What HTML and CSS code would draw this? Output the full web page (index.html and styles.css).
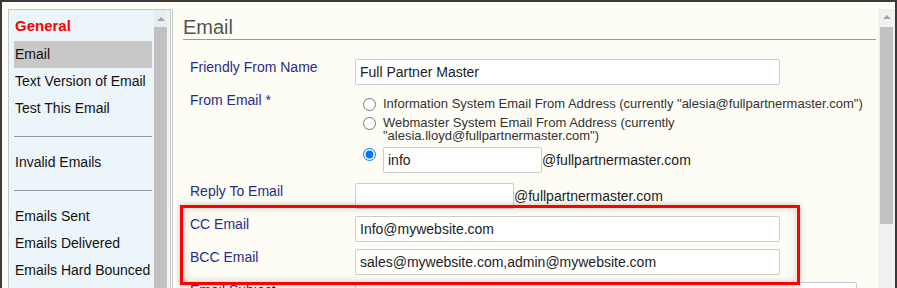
FILE: index.html
```html
<!DOCTYPE html>
<html lang="en">
<head>
    <meta charset="UTF-8">
    <meta name="viewport" content="width=device-width, initial-scale=1.0">
    <title>Email Settings</title>
    <link rel="stylesheet" href="styles.css">
</head>
<body>
    <div class="frame">
        <aside class="side">
            <ul class="menu">
                <li class="menu-head">General</li>
                <li class="active">Email</li>
                <li>Text Version of Email</li>
                <li>Test This Email</li>
                <li class="sep"></li>
                <li>Invalid Emails</li>
                <li class="sep"></li>
                <li>Emails Sent</li>
                <li>Emails Delivered</li>
                <li>Emails Hard Bounced</li>
            </ul>
            <div class="vscroll side-scroll">
                <span class="arrow"></span>
                <span class="thumb"></span>
            </div>
        </aside>

        <main class="content">
            <h2 class="title">Email</h2>
            <div class="form">
                <div class="row">
                    <label class="label">Friendly From Name</label>
                    <input class="field" type="text" value="Full Partner Master">
                </div>
                <div class="row">
                    <label class="label">From Email *</label>
                    <div class="options">
                        <div class="option">
                            <input type="radio" name="from">
                            <span class="opt-text">Information System Email From Address (currently "alesia@fullpartnermaster.com")</span>
                        </div>
                        <div class="option">
                            <input type="radio" name="from">
                            <span class="opt-text">Webmaster System Email From Address (currently<br>"alesia.lloyd@fullpartnermaster.com")</span>
                        </div>
                        <div class="option">
                            <input type="radio" name="from" checked>
                            <input class="field short" type="text" value="info">
                            <span class="domain">@fullpartnermaster.com</span>
                        </div>
                    </div>
                </div>
                <div class="row">
                    <label class="label">Reply To Email</label>
                    <input class="field short" type="text" value="">
                    <span class="domain">@fullpartnermaster.com</span>
                </div>
                <div class="row">
                    <label class="label">CC Email</label>
                    <input class="field" type="text" value="Info@mywebsite.com">
                </div>
                <div class="row">
                    <label class="label">BCC Email</label>
                    <input class="field" type="text" value="sales@mywebsite.com,admin@mywebsite.com">
                </div>
                <div class="row">
                    <label class="label">Email Subject</label>
                    <input class="field wide" type="text" value="">
                </div>
            </div>
            <!-- annotation box round the CC / BCC fields -->
            <div class="highlight"></div>
        </main>

        <div class="vscroll main-scroll">
            <span class="arrow"></span>
            <span class="thumb"></span>
        </div>
    </div>
</body>
</html>
```

FILE: styles.css
```css
body {
    margin: 0;
    font-family: "Liberation Sans", Arial, sans-serif;
    font-size: 14px;
    color: #111;
}
.frame {
    display: flex;
    align-items: flex-start;
    width: 897px;
    height: 288px;
    box-sizing: border-box;
    border-top: 2px solid #3a3a3a;
    border-left: 2px solid #3a3a3a;
    border-right: 2px solid #3a3a3a;
    background-color: #fdfdf5;
    overflow: hidden;
}

/* left menu */
.side {
    display: flex;
    width: 163px;
    height: 300px;
    box-sizing: border-box;
    margin: 7px 0 0 6px;
    border: 1px solid #c8c8c8;
    background-color: #ecf5f9;
    flex-shrink: 0;
}
.menu {
    list-style: none;
    margin: 0;
    padding: 4px 0 0 5px;
    width: 138px;
}
.menu li {
    height: 27px;
    line-height: 26px;
    padding-left: 1px;
    white-space: nowrap;
}
.menu .menu-head {
    color: #ff0000;
    font-weight: bold;
    font-size: 15px;
    line-height: 24px;
}
.menu .active {
    background-color: #c8c8c8;
}
.menu .sep {
    height: 1px;
    margin: 14px 0 12px;
    background-color: #999;
}

/* scrollbars */
.vscroll {
    display: flex;
    flex-direction: column;
    align-items: center;
    flex-shrink: 0;
}
.arrow {
    width: 0;
    height: 0;
    border-left: 4px solid transparent;
    border-right: 4px solid transparent;
    border-bottom: 4px solid #a3a3a3;
}
.thumb {
    width: 13px;
    background-color: #c1c1c1;
}
.side-scroll {
    width: 13px;
    margin-left: 2px;
    background-color: #e6eef1;
}
.side-scroll .arrow {
    margin-top: 7px;
}
.side-scroll .thumb {
    margin-top: 6px;
    height: 280px;
}
.main-scroll {
    width: 17px;
    height: 300px;
    margin-top: 7px;
    background-color: #f1f1f1;
}
.main-scroll .arrow {
    margin-top: 6px;
}
.main-scroll .thumb {
    margin-top: 8px;
    height: 197px;
}

/* main panel */
.content {
    position: relative;
    width: 706px;
    height: 300px;
    box-sizing: border-box;
    margin: 7px 0 0 1px;
    padding: 6px 2px 0 10px;
    border-left: 1px solid #c8c8c8;
    flex-shrink: 0;
}
.title {
    margin: 0;
    font-size: 20px;
    font-weight: normal;
    line-height: 24px;
    color: #555;
    border-bottom: 1px solid #999;
}
.form {
    margin-top: 19px;
    padding-left: 7px;
}
.row {
    display: flex;
    align-items: flex-start;
    margin-bottom: 7px;
}
.label {
    width: 165px;
    flex-shrink: 0;
    line-height: 16px;
    color: #2a2a8c;
}
.field {
    width: 425px;
    height: 26px;
    box-sizing: border-box;
    margin: 0;
    padding: 0 4px;
    border: 1px solid #ccc;
    border-radius: 2px;
    background-color: #fff;
    font-family: "Liberation Sans", Arial, sans-serif;
    font-size: 14px;
    color: #222;
    flex-shrink: 0;
}
.field.short {
    width: 159px;
}
.field.wide {
    width: 502px;
}
.domain {
    align-self: center;
    color: #222;
    white-space: nowrap;
}
.options {
    flex-shrink: 0;
    padding: 5px 0 3px 8px;
}
.option {
    display: flex;
    align-items: flex-start;
    margin-bottom: 5px;
}
.option:last-child {
    margin-bottom: 0;
}
.option input[type="radio"] {
    width: 13px;
    height: 13px;
    margin: 1px 7px 0 0;
    flex-shrink: 0;
}
.opt-text {
    white-space: nowrap;
    font-size: 13px;
    line-height: 13px;
    color: #333;
}
.highlight {
    position: absolute;
    left: 7px;
    top: 196px;
    width: 620px;
    height: 80px;
    box-sizing: border-box;
    border: 3px solid #ff0000;
    box-shadow: 0 0 6px rgba(0, 0, 0, 0.25), inset 0 0 8px rgba(0, 0, 0, 0.18);
}
```
